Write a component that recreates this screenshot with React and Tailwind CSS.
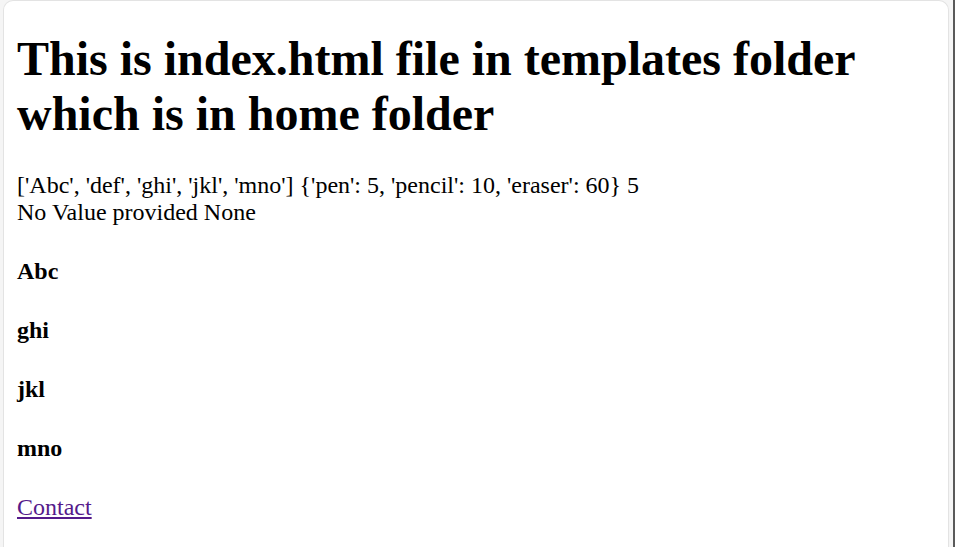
export default function App() {
  const items = ['Abc', 'ghi', 'jkl', 'mno'];
  return (
    <div className="flex h-[547px] overflow-hidden bg-[#f5f5f5]">
      <div className="ml-[3px] mr-[4px] flex-1 overflow-hidden rounded-t-[10px] border-x border-t border-[#e3e3e3] bg-white px-[13px] pt-[30px] font-['Liberation_Serif',serif] text-[24px] leading-[27px] text-black">
        <h1 className="mb-[31px] text-[48px] font-bold leading-[1.15]">
          This is index.html file in templates folder which is in home folder
        </h1>
        <div>
          ['Abc', 'def', 'ghi', 'jkl', 'mno'] {"{'pen': 5, 'pencil': 10, 'eraser': 60}"} 5
          <br />
          No Value provided None
        </div>
        {items.map((item) => (
          <h4 key={item} className="my-[32px] font-bold">
            {item}
          </h4>
        ))}
        <a href="#" className="text-[#551a8b] underline">
          Contact
        </a>
      </div>
      <div className="w-[2px] bg-[#5a5a5a]" />
    </div>
  );
}
